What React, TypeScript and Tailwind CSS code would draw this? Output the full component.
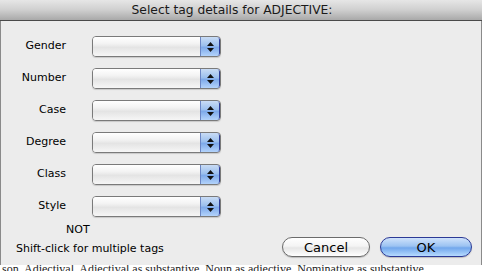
import React from "react";

const font = { fontFamily: '"Lucida Grande", "DejaVu Sans", "Liberation Sans", sans-serif' };

function Popup() {
  return (
    <div className="relative flex h-[21px] w-[129px] overflow-hidden rounded-[4px] border border-[#7a7a7a] shadow-[0_1px_1px_rgba(0,0,0,0.15)]">
      <div className="flex-1 bg-[linear-gradient(to_bottom,#ffffff_0%,#f3f3f3_35%,#e4e4e4_55%,#f6f6f6_100%)]" />
      <div className="flex w-[20px] flex-col items-center justify-center gap-[2px] border-l border-[#6b86c4] bg-[linear-gradient(to_bottom,#c9dcf5_0%,#9cc0ee_45%,#7eaaea_55%,#b3d3fb_100%)]">
        <svg width="7" height="4" viewBox="0 0 7 4"><polygon points="3.5,0 7,4 0,4" fill="#111" /></svg>
        <svg width="7" height="4" viewBox="0 0 7 4"><polygon points="0,0 7,0 3.5,4" fill="#111" /></svg>
      </div>
      <div className="pointer-events-none absolute inset-0 rounded-[3px] border-r-[1.5px] border-[#2c3a96]" />
    </div>
  );
}

export default function App() {
  const rows = ["Gender", "Number", "Case", "Degree", "Class", "Style"];
  return (
    <div className="flex h-[271px] w-[482px] flex-col overflow-hidden bg-white" style={font}>
      <div className="flex h-[21px] items-center justify-center border-b border-[#4a4a4a] bg-[linear-gradient(to_bottom,#e6e6e6_0%,#cfcfcf_50%,#a9a9a9_100%)] pr-[18px] text-[12.3px] text-[#1a1a1a]">
        Select tag details for ADJECTIVE:
      </div>
      <div className="flex h-[244px] flex-col border-x border-[#8a8a8a] bg-[#ececec] pt-[15px]">
        <div className="flex flex-col gap-[11px]">
          {rows.map((r) => (
            <div key={r} className="flex h-[21px] items-center">
              <div className="w-[65px] text-right text-[11px] text-black">{r}</div>
              <div className="ml-[26px]">
                <Popup />
              </div>
            </div>
          ))}
        </div>
        <div className="ml-[65px] mt-[6px] text-[11px] leading-[14px] text-black">NOT</div>
        <div className="flex items-center">
          <div className="ml-[15px] mt-[4px] text-[11px] text-black">Shift-click for multiple tags</div>
          <div className="ml-auto mr-[9px] flex gap-[10px]">
            <div className="flex h-[20px] w-[88px] items-center justify-center rounded-full border border-[#6b6b6b] bg-[linear-gradient(to_bottom,#ffffff_0%,#f4f4f4_45%,#e6e6e6_55%,#ffffff_100%)] text-[13px] text-black shadow-[0_1px_1px_rgba(0,0,0,0.2)]">
              Cancel
            </div>
            <div className="flex h-[20px] w-[92px] items-center justify-center rounded-full border border-[#2c3a96] bg-[linear-gradient(to_bottom,#cfe2fb_0%,#9cc3f2_45%,#72a7ec_55%,#b6dbff_100%)] text-[13px] text-black shadow-[0_1px_1px_rgba(0,0,0,0.2)]">
              OK
            </div>
          </div>
        </div>
      </div>
      <div className="h-[6px] overflow-hidden bg-white">
        <div className="-mt-[2px] whitespace-nowrap pl-[2px] text-[12px] leading-[12px] text-[#222]" style={{ fontFamily: '"Liberation Serif", serif' }}>
          son. Adjectival. Adjectival as substantive. Noun as adjective. Nominative as substantive.
        </div>
      </div>
    </div>
  );
}
